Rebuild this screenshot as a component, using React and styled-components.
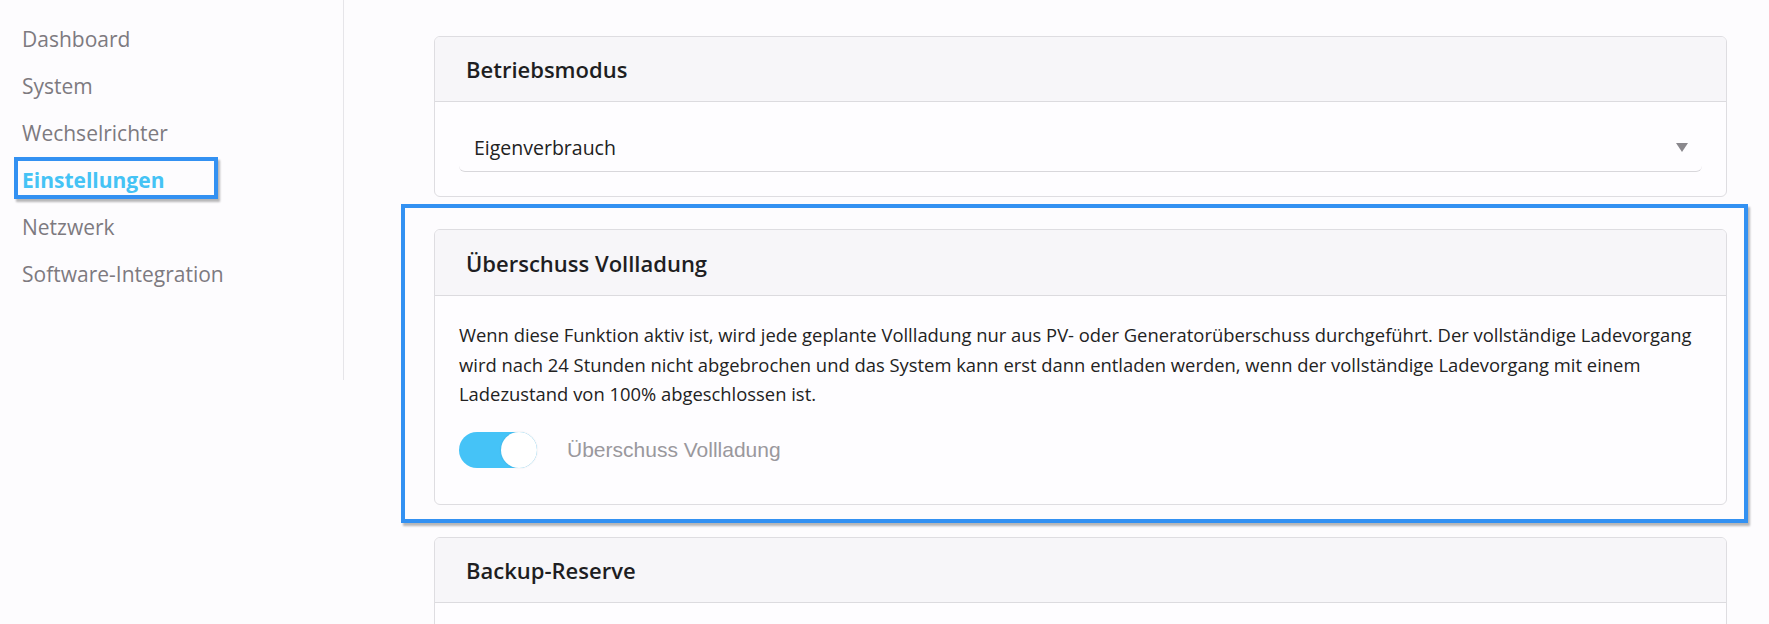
import React from 'react';
import styled, { createGlobalStyle } from 'styled-components';

const GlobalStyle = createGlobalStyle`
  html, body {
    margin: 0;
    padding: 0;
    background: #fdfcfe;
    font-family: 'Open Sans', 'Noto Sans', sans-serif;
    color: #222;
  }
`;

const Page = styled.div`
  display: flex;
  align-items: flex-start;
  width: 1769px;
  height: 624px;
  overflow: hidden;
`;

const Sidebar = styled.nav`
  width: 344px;
  height: 380px;
  flex-shrink: 0;
  border-right: 1px solid #e6e5e9;
  padding-top: 16px;
  box-sizing: border-box;
`;

const NavItem = styled.div`
  position: relative;
  padding-left: 22px;
  height: 47px;
  line-height: 47px;
  font-size: 21px;
  color: ${(p) => (p.active ? '#45c3f5' : '#7d7a80')};
  font-weight: ${(p) => (p.active ? 700 : 400)};
  width: fit-content;
`;

const Annotation = styled.span`
  position: absolute;
  border: 4px solid #3391f2;
  box-shadow: 2px 3px 2px rgba(0, 0, 0, 0.28);
  pointer-events: none;
  top: ${(p) => p.top}px;
  left: ${(p) => p.left}px;
  right: ${(p) => p.right}px;
  bottom: ${(p) => p.bottom}px;
`;

const Main = styled.main`
  flex: 1;
  padding: 36px 42px 0 90px;
  display: flex;
  flex-direction: column;
  gap: 32px;
`;

const CardWrap = styled.div`
  position: relative;
`;

const Card = styled.section`
  background: #fefdff;
  border: 1px solid #dedde1;
  border-radius: 6px;
  overflow: hidden;
`;

const CardHeader = styled.header`
  box-sizing: border-box;
  background: #f7f6f9;
  border-bottom: 1px solid #dcdbdf;
  height: ${(p) => p.h || 65}px;
  display: flex;
  align-items: center;
  padding-left: 31px;
  font-size: 22px;
  font-weight: 600;
  color: #1e1e22;
`;

const CardBody = styled.div`
  padding: ${(p) => p.pad || '22px 24px 24px'};
`;

const Select = styled.div`
  box-sizing: border-box;
  height: 48px;
  display: flex;
  align-items: center;
  justify-content: space-between;
  padding: 0 14px 0 15px;
  border-bottom: 1px solid #d8d7db;
  border-radius: 0 0 6px 6px;
  font-size: 19.5px;
  color: #222;
`;

const Arrow = styled.span`
  width: 0;
  height: 0;
  border-left: 6px solid transparent;
  border-right: 6px solid transparent;
  border-top: 9px solid #8a888d;
`;

const Description = styled.p`
  margin: 0;
  font-size: 18.4px;
  line-height: 29.5px;
  color: #222;
`;

const ToggleRow = styled.div`
  display: flex;
  align-items: center;
  gap: 30px;
  margin-top: 23px;
  margin-bottom: 12px;
`;

const Track = styled.span`
  position: relative;
  width: 78px;
  height: 36px;
  border-radius: 18px;
  background: ${(p) => (p.on ? '#45c3f7' : '#d6d5da')};
`;

const Knob = styled.span`
  position: absolute;
  top: 0;
  left: ${(p) => (p.on ? '42px' : '0')};
  width: 36px;
  height: 36px;
  border-radius: 50%;
  background: #fff;
  box-shadow: 0 0 2px rgba(0, 0, 0, 0.12);
`;

const ToggleLabel = styled.span`
  font-family: 'Liberation Sans', Arial, sans-serif;
  font-size: 21px;
  color: #9a989d;
`;

const Toggle = ({ on, label }) => (
  <ToggleRow>
    <Track on={on}>
      <Knob on={on} />
    </Track>
    <ToggleLabel>{label}</ToggleLabel>
  </ToggleRow>
);

const navItems = [
  'Dashboard',
  'System',
  'Wechselrichter',
  'Einstellungen',
  'Netzwerk',
  'Software-Integration',
];

export default function App() {
  return (
    <>
      <GlobalStyle />
      <Page>
        <Sidebar>
          {navItems.map((item) => (
            <NavItem key={item} active={item === 'Einstellungen'}>
              {item}
              {item === 'Einstellungen' && (
                <Annotation top={0} left={14} right={-54} bottom={5} />
              )}
            </NavItem>
          ))}
        </Sidebar>
        <Main>
          <Card>
            <CardHeader>Betriebsmodus</CardHeader>
            <CardBody>
              <Select>
                Eigenverbrauch
                <Arrow />
              </Select>
            </CardBody>
          </Card>

          <CardWrap>
            <Card>
              <CardHeader h={66}>Überschuss Vollladung</CardHeader>
              <CardBody pad="24px 24px 24px">
                <Description>
                  Wenn diese Funktion aktiv ist, wird jede geplante Vollladung nur aus PV- oder
                  Generatorüberschuss durchgeführt. Der vollständige Ladevorgang wird nach 24
                  Stunden nicht abgebrochen und das System kann erst dann entladen werden, wenn
                  der vollständige Ladevorgang mit einem Ladezustand von 100% abgeschlossen ist.
                </Description>
                <Toggle on label="Überschuss Vollladung" />
              </CardBody>
            </Card>
            <Annotation top={-25} left={-33} right={-21} bottom={-18} />
          </CardWrap>

          <Card>
            <CardHeader>Backup-Reserve</CardHeader>
            <CardBody />
          </Card>
        </Main>
      </Page>
    </>
  );
}
